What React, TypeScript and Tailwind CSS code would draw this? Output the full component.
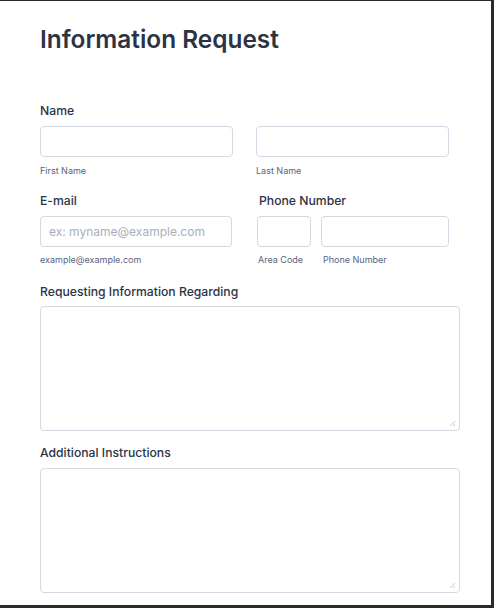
import React from "react";

const Label: React.FC<{ children: React.ReactNode; className?: string }> = ({ children, className = "" }) => (
  <div className={`text-[12.2px] leading-5 font-medium text-[#2c3345] ${className}`}>{children}</div>
);

const Sub: React.FC<{ children: React.ReactNode; className?: string }> = ({ children, className = "" }) => (
  <div className={`text-[9px] leading-3 text-[#57647e] ${className}`}>{children}</div>
);

const Box: React.FC<{ className?: string; placeholder?: string }> = ({ className = "", placeholder }) => (
  <div className={`h-[31px] border border-[#d4d8e2] rounded-[4px] bg-white flex items-center px-2 ${className}`}>
    {placeholder && <span className="text-[12px] text-[#a8aebb]">{placeholder}</span>}
  </div>
);

const Area: React.FC = () => (
  <div className="relative h-[125px] w-[420px] border border-[#d4d8e2] rounded-[4px] bg-white">
    <svg className="absolute right-[3px] bottom-[3px]" width="7" height="7" viewBox="0 0 7 7">
      <path d="M6 1 L1 6 M6 4 L4 6" stroke="#b5bac6" strokeWidth="0.8" />
    </svg>
  </div>
);

export default function App() {
  return (
    <div className="w-[494px] h-[608px] bg-[#2a2a2a] pt-px" style={{ fontFamily: "Inter, 'Noto Sans', sans-serif" }}>
      <div className="w-[491px] h-[604px] bg-white pl-10 pt-[22px]">
        <h1 className="text-[24.4px] leading-8 font-semibold text-[#2c3345]">Information Request</h1>

        <Label className="mt-[46px]">Name</Label>
        <div className="flex gap-[23px] mt-[5px]">
          <div className="w-[193px]">
            <Box />
            <Sub className="mt-[8px]">First Name</Sub>
          </div>
          <div className="w-[193px]">
            <Box />
            <Sub className="mt-[8px]">Last Name</Sub>
          </div>
        </div>

        <div className="flex gap-[25px] mt-[14px]">
          <div className="w-[192px]">
            <Label>E-mail</Label>
            <Box className="mt-[5px]" placeholder="ex: myname@example.com" />
            <Sub className="mt-[7px]">example@example.com</Sub>
          </div>
          <div>
            <Label className="ml-[2px]">Phone Number</Label>
            <div className="flex gap-[10px] mt-[5px]">
              <div className="w-[54px]">
                <Box />
                <Sub className="mt-[7px] ml-[1px]">Area Code</Sub>
              </div>
              <div className="w-[128px]">
                <Box />
                <Sub className="mt-[7px] ml-[2px]">Phone Number</Sub>
              </div>
            </div>
          </div>
        </div>

        <Label className="mt-[16px]">Requesting Information Regarding</Label>
        <div className="mt-[4px]">
          <Area />
        </div>

        <Label className="mt-[12px]">Additional Instructions</Label>
        <div className="mt-[5px]">
          <Area />
        </div>
      </div>
    </div>
  );
}
